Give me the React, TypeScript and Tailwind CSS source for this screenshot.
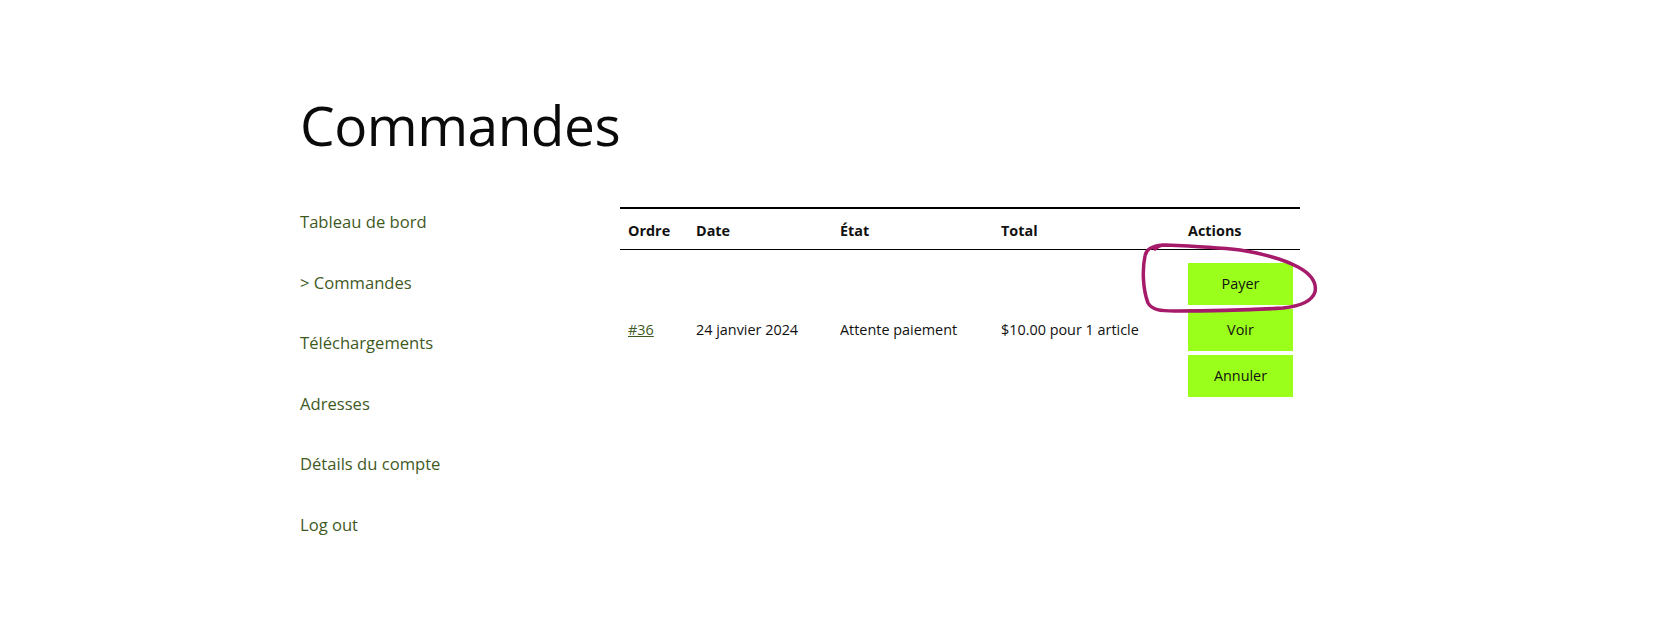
import React from "react";

const navItems = [
  "Tableau de bord",
  "> Commandes",
  "Téléchargements",
  "Adresses",
  "Détails du compte",
  "Log out",
];

export default function App() {
  return (
    <div
      className="relative min-h-[622px] w-full bg-white text-[#111]"
      style={{ fontFamily: '"Open Sans", "Noto Sans", sans-serif' }}
    >
      <div className="pl-[300px] pt-[85px]">
        <h1 className="text-[55px] leading-[80px] font-normal tracking-[-0.5px] text-[#0a0a0a]">
          Commandes
        </h1>
        <div className="mt-[42px] flex">
          <nav className="w-[320px] flex flex-col">
            {navItems.map((n) => (
              <a
                key={n}
                href="#"
                className="block h-[60.6px] text-[16.6px] leading-[30px] text-[#3f5a1f]"
              >
                {n}
              </a>
            ))}
          </nav>
          <div className="w-[680px]">
            <table className="w-full table-fixed border-collapse text-[14.4px]">
              <colgroup>
                <col className="w-[68px]" />
                <col className="w-[144px]" />
                <col className="w-[161px]" />
                <col className="w-[187px]" />
                <col className="w-[120px]" />
              </colgroup>
              <thead>
                <tr className="border-t-2 border-b border-t-black border-b-black">
                  <th className="h-[41px] px-[8px] pt-[4px] text-left font-bold">Ordre</th>
                  <th className="px-[8px] pt-[4px] text-left font-bold">Date</th>
                  <th className="px-[8px] pt-[4px] text-left font-bold">État</th>
                  <th className="px-[8px] pt-[4px] text-left font-bold">Total</th>
                  <th className="px-[8px] pt-[4px] text-left font-bold">Actions</th>
                </tr>
              </thead>
              <tbody>
                <tr>
                  <td className="px-[8px] align-middle">
                    <a href="#" className="underline text-[#3f5a1f]">#36</a>
                  </td>
                  <td className="px-[8px] align-middle">24 janvier 2024</td>
                  <td className="px-[8px] align-middle">Attente paiement</td>
                  <td className="px-[8px] align-middle whitespace-nowrap">$10.00 pour 1 article</td>
                  <td className="px-[8px] py-[13px] align-middle">
                    <div className="flex flex-col gap-[4px]">
                      {["Payer", "Voir", "Annuler"].map((b) => (
                        <button
                          key={b}
                          className="h-[42px] w-[105px] bg-[#9bff1c] text-[14.4px] text-[#111]"
                        >
                          {b}
                        </button>
                      ))}
                    </div>
                  </td>
                </tr>
              </tbody>
            </table>
          </div>
        </div>
      </div>
      <svg
        className="pointer-events-none absolute left-0 top-0"
        width="1657"
        height="622"
        viewBox="0 0 1657 622"
      >
        <path
          d="M1163 245 C1150 246 1146 250 1145 256 C1142 270 1143 290 1148 303 C1152 310 1160 311 1175 311 C1210 311 1250 310 1283 308 C1302 306 1312 301 1315 292 C1317 282 1311 274 1298 267 C1285 260 1265 254 1240 250 C1215 247 1190 246 1165 245 C1160 245 1157 247 1155 249"
          fill="none"
          stroke="#a51b6a"
          strokeWidth="3.5"
          strokeLinecap="round"
          strokeLinejoin="round"
        />
      </svg>
    </div>
  );
}
